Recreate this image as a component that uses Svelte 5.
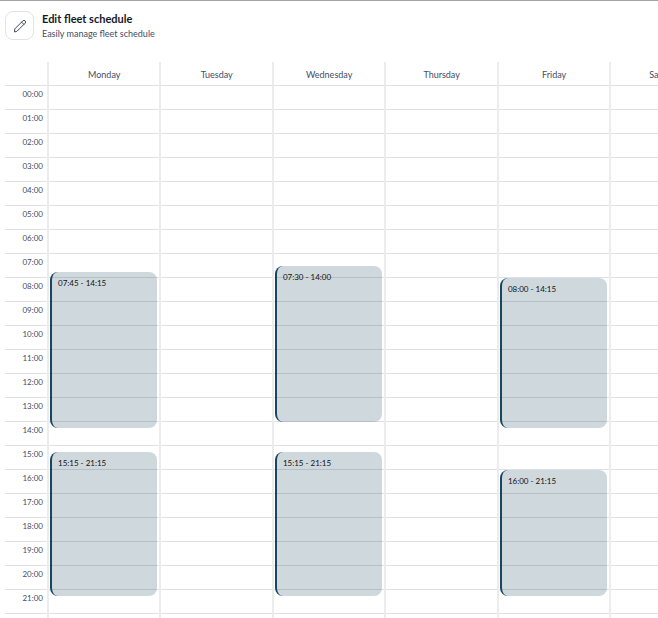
<script lang="ts">
  type Shift = { start: string; end: string }
  type Day = { name: string; shifts: Shift[] }

  const HOUR_HEIGHT = 24

  const hours = Array.from({ length: 24 }, (_, i) => `${String(i).padStart(2, '0')}:00`)

  let days: Day[] = $state([
    {
      name: 'Monday',
      shifts: [
        { start: '07:45', end: '14:15' },
        { start: '15:15', end: '21:15' }
      ]
    },
    { name: 'Tuesday', shifts: [] },
    {
      name: 'Wednesday',
      shifts: [
        { start: '07:30', end: '14:00' },
        { start: '15:15', end: '21:15' }
      ]
    },
    { name: 'Thursday', shifts: [] },
    {
      name: 'Friday',
      shifts: [
        { start: '08:00', end: '14:15' },
        { start: '16:00', end: '21:15' }
      ]
    },
    { name: 'Saturday', shifts: [] },
    { name: 'Sunday', shifts: [] }
  ])

  function toOffset(time: string) {
    const [h, m] = time.split(':').map(Number)
    return (h + m / 60) * HOUR_HEIGHT
  }
</script>

<main class="page">
  <header class="head">
    <div class="head-icon">
      <svg width="14" height="14" viewBox="0 0 14 14" fill="none" stroke="currentColor" stroke-linecap="round" stroke-linejoin="round" aria-hidden="true">
        <path d="M1.5 12.5l.3-2.6L9.8 1.9a1.5 1.5 0 0 1 2.3 2.3L4.1 12.2zM8.6 3.1l2.3 2.3" />
      </svg>
    </div>
    <div class="head-text">
      <h1 class="title">Edit fleet schedule</h1>
      <p class="subtitle">Easily manage fleet schedule</p>
    </div>
  </header>

  <div class="scroller">
    <div class="calendar">
      <div class="corner"></div>
      {#each days as day}
        <div class="day-name">{day.name}</div>
      {/each}

      <div class="times">
        {#each hours as hour}
          <time class="slot">{hour}</time>
        {/each}
      </div>
      {#each days as day}
        <div class="day">
          {#each hours as _}
            <div class="slot"></div>
          {/each}
          {#each day.shifts as shift}
            <div
              class="shift"
              style="top: {toOffset(shift.start)}px; height: {toOffset(shift.end) - toOffset(shift.start)}px"
            >
              {shift.start} - {shift.end}
            </div>
          {/each}
        </div>
      {/each}
    </div>
  </div>
</main>

<style>
  :global(body) {
    background: #fff;
  }

  .page {
    display: flex;
    flex-direction: column;
    height: 100vh;
    box-sizing: border-box;
    border-top: 1px solid #a3a3a3;
    padding-left: 5px;
    overflow: hidden;
    font-family: Lato, 'Liberation Sans', sans-serif;
    color: #414e68;
  }

  .head {
    display: flex;
    align-items: flex-start;
    gap: 8px;
    padding: 10px 0 21px;
  }

  .head-icon {
    display: flex;
    align-items: center;
    justify-content: center;
    width: 29px;
    height: 29px;
    box-sizing: border-box;
    border: 1px solid #e1e3e8;
    border-radius: 8px;
    color: #3f4a5e;
  }

  .title {
    margin: 0;
    font-size: 11px;
    line-height: 16px;
    font-weight: 700;
    color: #16191f;
  }

  .subtitle {
    margin: 0;
    font-size: 9px;
    line-height: 14px;
  }

  .scroller {
    flex: 1;
    min-height: 0;
    overflow: auto;
    scrollbar-width: none;
  }

  /* wider than the view, so the weekend scrolls in from the right */
  .calendar {
    display: grid;
    grid-template-columns: 42px repeat(7, 1fr);
    width: 127%;
  }

  .corner,
  .day-name {
    height: 24px;
    box-sizing: border-box;
    border-bottom: 1px solid #dfe0e5;
  }

  .day-name {
    border-left: 2px solid #ececef;
    font-size: 9px;
    line-height: 25px;
    text-align: center;
  }

  .day {
    position: relative;
    border-left: 2px solid #ececef;
  }

  .slot {
    display: block;
    height: 24px;
    box-sizing: border-box;
    border-bottom: 1px solid #dfe0e5;
  }

  .times .slot {
    padding-right: 4px;
    font-size: 8px;
    line-height: 16px;
    text-align: right;
  }

  .shift {
    position: absolute;
    left: 1px;
    right: 2px;
    box-sizing: border-box;
    padding: 4px 6px;
    border-left: 2px solid #164660;
    border-radius: 8px;
    background: rgba(16, 62, 84, 0.2);
    font-size: 8px;
    line-height: 14px;
    color: #111;
  }
</style>
